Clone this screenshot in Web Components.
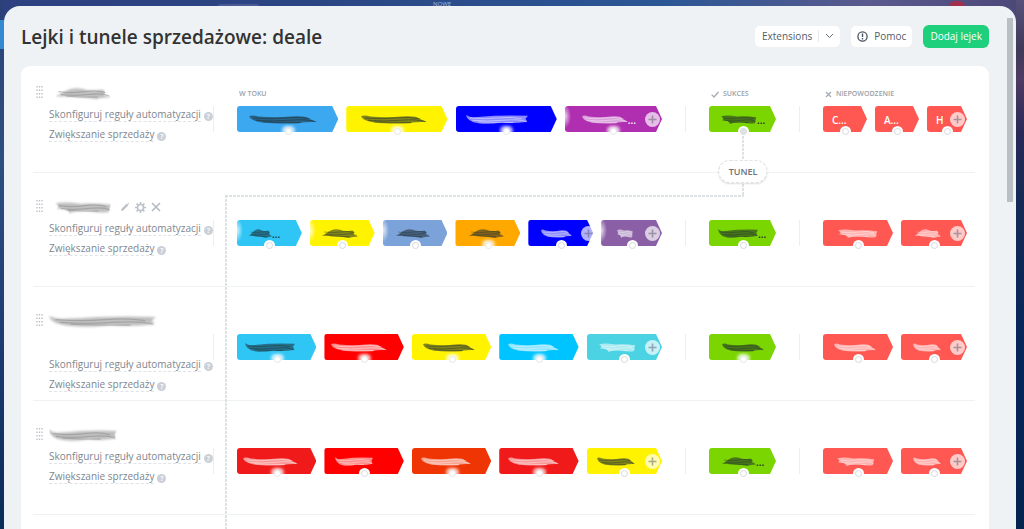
<!DOCTYPE html>
<html lang="pl">
<head>
<meta charset="utf-8">
<meta name="viewport" content="width=device-width, initial-scale=1">
<title>Lejki i tunele sprzedażowe</title>
<style>
  html, body { margin: 0; height: 100%; }
  body {
    overflow: hidden;
    font-family: "Open Sans", "Noto Sans", sans-serif;
    font-size: 10px;
    color: #525c69;
    --columns: 180px 472fr 114fr 176fr;
  }
</style>
</head>
<body>
<crm-backdrop>
  <side-panel>
    <panel-header slot="header" heading="Lejki i tunele sprzedażowe: deale"></panel-header>
    <funnel-board></funnel-board>
  </side-panel>
</crm-backdrop>

<script>
// creates the shadow root of an element from a markup string
function attach(el, html) {
  const template = document.createElement('template');
  template.innerHTML = html;
  const root = el.attachShadow({ mode: 'open' });
  root.appendChild(template.content.cloneNode(true));
  return root;
}

// dimmed page behind the panel
class CrmBackdrop extends HTMLElement {
  constructor() {
    super();
    attach(this, `
      <style>
        :host {
          display: flex;
          position: relative;
          box-sizing: border-box;
          height: 100vh;
          padding: 6px 8px 0 4px;
          overflow: hidden;
          background:
            linear-gradient(#3489d3, #3489d3) 0 20px / 4px 29px no-repeat,
            linear-gradient(#55517a, #403a58 50px, #4f3b62 80px, #2a2958 130px, #152a55 200px, #05265a 350px, #04234f) right / 8px 100% no-repeat,
            linear-gradient(#2b4178, #2f4f80 30%, #223f78 55%, #0b2b58) left / 4px 100% no-repeat,
            linear-gradient(90deg, #2e4080, #2b4583 30%, #2b5795 65%, #5b5a8e 85%, #4b4878);
        }
        .search { position: absolute; left: 217px; top: 4px; width: 43px; height: 8px; border-radius: 4px; background: #4a5b94; }
        .new { position: absolute; left: 433px; top: 0; font-size: 6px; line-height: 8px; color: #a9b8d8; }
        .badge { position: absolute; right: 59px; top: 1px; width: 16px; height: 12px; border-radius: 6px; background: #a2304c; }
        ::slotted(*) { flex: 1; min-width: 0; }
      </style>
      <span class="search"></span><span class="new">NOWE</span><span class="badge"></span>
      <slot></slot>
    `);
  }
}

class SidePanel extends HTMLElement {
  constructor() {
    super();
    attach(this, `
      <style>
        :host {
          display: block;
          position: relative;
          box-sizing: border-box;
          padding: 0 27px 0 17px;
          border-radius: 16px 16px 0 0;
          background: #eef2f4;
          overflow: hidden;
        }
        .thumb { position: absolute; right: 3px; top: 12px; width: 6px; height: 184px; background: #b9bfc3; }
      </style>
      <slot name="header"></slot>
      <slot></slot>
      <div class="thumb"></div>
    `);
  }
}

class PanelHeader extends HTMLElement {
  constructor() {
    super();
    const root = attach(this, `
      <style>
        :host { display: flex; align-items: center; height: 60px; gap: 11px; }
        h1 { flex: 1; margin: 0; padding-top: 2px; font-size: 19px; line-height: 24px; font-weight: 600; color: #333; white-space: nowrap; }
        button { font: inherit; color: inherit; border: 0; background: none; padding: 0; cursor: pointer; }
        .split, .help { display: flex; align-items: center; height: 21px; border-radius: 5px; background: #fff; }
        .split button:first-child { padding: 0 6px 0 7px; }
        .split button:last-child { display: flex; align-items: center; height: 12px; padding: 0 6px; border-left: 1px solid #e6e9ec; }
        .help { padding: 0 6px; gap: 6px; }
        .add { height: 23px; padding: 0 7px; border-radius: 6px; background: #1ecf7c; color: #fff; }
      </style>
      <h1></h1>
      <div class="split">
        <button type="button">Extensions</button>
        <button type="button" aria-label="Więcej">
          <svg width="9" height="6" viewBox="0 0 9 6"><path d="M1 1l3.500 3.500L8 1" fill="none" stroke="#6a737f"/></svg>
        </button>
      </div>
      <button type="button" class="help">
        <svg width="11" height="11" viewBox="0 0 11 11"><circle cx="5.500" cy="5.500" r="4.600" fill="none" stroke="#4a5361" stroke-width="1.300"/><path d="M5.500 2.500v3.500M5.500 7v1.400" stroke="#4a5361" stroke-width="1.400"/></svg>
        Pomoc
      </button>
      <button type="button" class="add">Dodaj lejek</button>
    `);
    this._title = root.querySelector('h1');
  }

  connectedCallback() {
    this._title.textContent = this.getAttribute('heading') || '';
  }
}

// hidden name: a wiped streak in place of the text
const STREAKS = {
  a: 'M0 0Q6 3 12 3Q30 2 46 1Q74 0 100 1L96 5L99 9Q76 12 58 10Q36 13 20 11Q2 9 0 0Z',
  b: 'M0 2Q4 -1 14 2Q40 4 62 2Q84 1 88 5L100 9Q80 9 74 11Q40 12 20 10Q4 8 0 2Z',
  c: 'M0 2Q14 -1 44 2Q70 1 98 3Q96 6 94 11Q80 12 62 10Q40 9 24 12Q28 8 2 7Q12 5 0 2Z',
  d: 'M0 9Q12 6 20 3Q34 -1 50 1Q62 4 84 2Q94 4 86 7L100 10Q84 10 74 12Q56 10 40 10Q20 9 0 9Z'
};

class WipedText extends HTMLElement {
  connectedCallback() {
    if (this.shadowRoot) return;
    attach(this, `
      <style>
        :host { display: block; }
        svg { display: block; width: 100%; height: 100%; overflow: visible; }
        .haze { filter: blur(1px); }
        .core { filter: blur(.6px); }
      </style>
      <svg viewBox="0 0 100 12" preserveAspectRatio="none" aria-hidden="true">
        <path class="haze" d="${STREAKS[this.getAttribute('shape')]}" fill="currentColor" opacity=".55"/>
        <path class="core" d="M6 4Q30 6 52 4T90 5M10 7Q34 9 60 7T97 9M20 9Q46 10 76 10" fill="none" stroke="currentColor" stroke-width="1.300" opacity=".5"/>
      </svg>
    `);
  }
}

class HelpHint extends HTMLElement {
  constructor() {
    super();
    attach(this, `
      <style>
        :host { display: inline-flex; }
        button {
          width: 9px; height: 9px; padding: 0; border: 0; border-radius: 50%;
          background: #cbd0d8; color: #fff; font: 600 7px/9px "Open Sans", sans-serif; cursor: pointer;
        }
      </style>
      <button type="button">?</button>
    `);
  }
}

class FunnelStage extends HTMLElement {
  connectedCallback() {
    if (this.shadowRoot) return;
    const a = (name) => this.getAttribute(name);
    const text = a('text');
    const label = text
      ? `<span class="text">${text}</span>`
      : `<wiped-text shape="${a('shape')}"></wiped-text>${this.hasAttribute('dots') ? '<span>...</span>' : ''}`;
    attach(this, `
      <style>
        :host { display: block; position: relative; flex: 1 1 4px; min-width: 0; height: 26px; }
        :host(:last-child) { flex-basis: 0; }
        .body {
          display: flex;
          align-items: center;
          box-sizing: border-box;
          height: 100%;
          padding: 1px 0 0 ${a('start')}px;
          border-radius: 3px 0 0 3px;
          overflow: hidden;
          background: ${this.hasAttribute('faded') ? 'radial-gradient(ellipse 6px 12px at 0 40%, #fffc, #fff0), ' : ''}${a('color')};
          color: ${a('ink') === 'dark' ? '#1d2a30' : '#fff'};
          clip-path: polygon(0 0, calc(100% - 6px) 0, 100% 50%, calc(100% - 6px) 100%, 0 100%);
          white-space: nowrap;
          font-weight: 600;
        }
        wiped-text { width: ${a('wide')}px; height: 9px; }
        .port {
          position: absolute; left: 50%; top: 100%; width: 7px; height: 7px; box-sizing: border-box;
          margin: -4px 0 0 -3px; border: 1px solid #d5dadd; border-radius: 50%; background: #fff;
          box-shadow: 0 0 0 2px #fff;
        }
        .soft { border-color: #e3e6e9; box-shadow: -2px -1px 3px 1px #fffb, 2px -1px 3px 1px #fffb; }
        .linked { background: #dfe3e7; }
        .add {
          position: absolute; right: ${a('plus') === 'edge' ? -3 : 2}px; top: 6px; width: 15px; height: 15px;
          padding: 0; border: 0; border-radius: 50%; background: #ffffffb0; cursor: pointer;
        }
        .add svg { display: block; }
      </style>
      <div class="body">${label}</div>
      <span class="port ${a('port') || ''}"></span>
      ${this.hasAttribute('plus') ? `
      <button type="button" class="add" aria-label="Dodaj">
        <svg width="15" height="15" viewBox="0 0 15 15"><path d="M7.500 3.500v8M3.500 7.500h8" stroke="#535c69" stroke-opacity=".5" stroke-width="1.600"/></svg>
      </button>` : ''}
    `);
  }
}

// one band of stages, with an optional caption above
class StageGroup extends HTMLElement {
  constructor() {
    super();
    attach(this, `
      <style>
        :host { display: block; min-width: 0; }
        ::slotted([slot=caption]) {
          display: flex; align-items: center; gap: 4px; height: 10px; margin: -17px 0 7px;
          padding-left: 26px; font-size: 7px; line-height: 10px; font-weight: 600; color: #9aa1a9;
        }
        .band { display: flex; gap: 8px; padding: 0 23px; border-left: 1px solid #eceff1; }
        :host([kind=fail]) .band { padding-right: 8px; }
      </style>
      <slot name="caption"></slot>
      <div class="band"><slot></slot></div>
    `);
  }
}

class FunnelRow extends HTMLElement {
  connectedCallback() {
    if (this.shadowRoot) return;
    const f = this.funnel;
    const tools = `
      <span class="tools">
        <button type="button" aria-label="Edytuj"><svg width="10" height="10" viewBox="0 0 10 10"><path d="M1 9l.6-2.200L6.800 1.600l1.600 1.600L3.200 8.400zM7.400 1l.6-.5 1.500 1.500-.5.6z" fill="#bcc2c9"/></svg></button>
        <button type="button" aria-label="Ustawienia"><svg width="11" height="11" viewBox="0 0 11 11"><circle cx="5.500" cy="5.500" r="3" fill="none" stroke="#bcc2c9" stroke-width="1.600"/><path d="M5.500 0v2M5.500 9v2M0 5.500h2M9 5.500h2M1.600 1.600l1.500 1.500M7.900 7.900l1.500 1.500M9.400 1.600L7.900 3.100M3.100 7.900L1.600 9.400" stroke="#bcc2c9" stroke-width="1.700"/></svg></button>
        <button type="button" aria-label="Usuń"><svg width="10" height="10" viewBox="0 0 10 10"><path d="M1 1l8 8M9 1L1 9" stroke="#b4bac1" stroke-width="1.600"/></svg></button>
      </span>`;
    attach(this, `
      <style>
        :host {
          display: grid;
          grid-template-columns: var(--columns);
          box-sizing: border-box;
          min-height: 114px;
          margin: 0 14px 0 12px;
          border-bottom: 1px solid #eff1f3;
        }
        :host(:first-of-type) { min-height: 107px; }
        .info { display: grid; grid-template-columns: 7px 1fr; column-gap: 6px; align-content: start; padding: 22px 0 0 3px; white-space: nowrap; }
        :host(:first-of-type) .info { padding-top: 15px; }
        .name { display: flex; align-items: center; height: 24px; gap: 8px; color: #8b8b8b; }
        .tall { padding-bottom: 22px; }
        .name wiped-text { height: 11px; }
        .handle { margin-top: 5px; }
        .tools { display: flex; gap: 5px; }
        .tools button { display: flex; padding: 0; border: 0; background: none; cursor: pointer; }
        .link { grid-column: 2; display: flex; align-items: center; height: 20px; gap: 3px; }
        a { color: #80868e; text-decoration: none; line-height: 13px; border-bottom: 1px dashed #dfe3e7; }
        help-hint { margin-top: 2px; }
        stage-group { padding-top: 47px; }
        :host(:first-of-type) stage-group { padding-top: 40px; }
      </style>
      <div class="info">
        <svg class="handle" width="7" height="12" viewBox="0 0 7 12"><path d="M1 0v12M3.500 0v12M6 0v12" stroke="#b9bfc6" stroke-width="1.300" stroke-dasharray="1.500 2"/></svg>
        <div class="name ${f.tall ? 'tall' : ''}">
          <wiped-text shape="${f.shape}" style="width:${f.width}px; margin-left:${f.start}px"></wiped-text>${f.tools ? tools : ''}
        </div>
        <div class="link"><a href="#automation">Skonfiguruj reguły automatyzacji</a><help-hint></help-hint></div>
        <div class="link"><a href="#sales">Zwiększanie sprzedaży</a><help-hint></help-hint></div>
      </div>
      ${['progress', 'success', 'fail'].map((kind) => `
        <stage-group kind="${kind}">
          ${f.captions ? CAPTIONS[kind] : ''}
          ${f[kind].map((s) => `<funnel-stage ${s}></funnel-stage>`).join('')}
        </stage-group>`).join('')}
    `);
  }
}

const CAPTIONS = {
  progress: '<span slot="caption">W TOKU</span>',
  success: '<span slot="caption"><svg width="8" height="7" viewBox="0 0 8 7"><path d="M.6 3.600L3 6l4.500-5" fill="none" stroke="#a4abb3" stroke-width="1.300"/></svg>SUKCES</span>',
  fail: '<span slot="caption"><svg width="7" height="7" viewBox="0 0 7 7"><path d="M1 1l5 5M6 1L1 6" stroke="#a4abb3" stroke-width="1.300"/></svg>NIEPOWODZENIE</span>'
};

// attributes of one stage
function stage(color, ink, start, wide, shape, more = '') {
  return `color="${color}" ink="${ink}" start="${start}" wide="${wide}" shape="${shape}" ${more}`;
}

const RED = '#ff5752';
const GREEN = '#7bd500';
const YELLOW = '#fff300';

const FUNNELS = [
  {
    shape: 'd', width: 56, start: 6, captions: true,
    progress: [
      stage('#3ba8f0', 'dark', 12, 68, 'b', 'port="soft"'),
      stage(YELLOW, 'dark', 15, 66, 'b', 'port="soft"'),
      stage('#0000ff', 'light', 10, 62, 'a', 'port="soft"'),
      stage('#b02eb0', 'light', 17, 46, 'b', 'port="soft" plus dots faded')
    ],
    success: [stage(GREEN, 'dark', 12, 36, 'c', 'port="linked" dots')],
    fail: [
      `color="${RED}" start="9" text="C..."`,
      `color="${RED}" start="9" text="A..."`,
      `color="${RED}" start="9" text="H" plus`
    ]
  },
  {
    shape: 'c', width: 57, start: 6, tools: true,
    progress: [
      stage('#2fc6f6', 'dark', 12, 23, 'd', 'dots faded'),
      stage(YELLOW, 'dark', 12, 36, 'd', 'faded'),
      stage('#7ba3da', 'dark', 13, 34, 'd', 'faded'),
      stage('#ffa900', 'dark', 14, 35, 'd', 'port="soft"'),
      stage('#0000ff', 'light', 13, 31, 'b', 'plus="edge"'),
      stage('#8a5fa6', 'light', 16, 16, 'c', 'plus faded')
    ],
    success: [stage(GREEN, 'dark', 9, 40, 'a', 'dots')],
    fail: [
      stage(RED, 'light', 15, 40, 'c'),
      stage(RED, 'light', 14, 26, 'd', 'plus')
    ]
  },
  {
    shape: 'a', width: 107, start: 0, tall: true,
    progress: [
      stage('#2fc6f6', 'dark', 8, 50, 'a', 'port="soft"'),
      stage('#ff0000', 'light', 7, 56, 'b', 'port="soft"'),
      stage(YELLOW, 'dark', 11, 52, 'b', 'port="soft"'),
      stage('#00c4ff', 'light', 9, 51, 'b', 'port="soft"'),
      stage('#4bd3e4', 'light', 12, 37, 'c', 'plus')
    ],
    success: [stage(GREEN, 'dark', 13, 42, 'b', 'port="soft"')],
    fail: [
      stage(RED, 'light', 11, 42, 'b'),
      stage(RED, 'light', 12, 28, 'b', 'plus')
    ]
  },
  {
    shape: 'a', width: 68, start: 0,
    progress: [
      stage('#f11a1a', 'light', 6, 55, 'b', 'port="soft"'),
      stage('#ff0000', 'light', 11, 38, 'a'),
      stage('#f03505', 'light', 9, 50, 'b', 'port="soft"'),
      stage('#f11a1a', 'light', 9, 51, 'b', 'port="soft"'),
      stage(YELLOW, 'dark', 10, 38, 'b', 'plus')
    ],
    success: [stage(GREEN, 'dark', 13, 34, 'd', 'dots')],
    fail: [
      stage(RED, 'light', 14, 38, 'c'),
      stage(RED, 'light', 12, 28, 'b', 'plus')
    ]
  }
];

// connector from the success stage of the first funnel to the funnel below
class TunnelLink extends HTMLElement {
  constructor() {
    super();
    attach(this, `
      <style>
        :host {
          display: grid;
          grid-template-columns: var(--columns);
          position: absolute;
          inset: 70px 13px 0 13px;
          pointer-events: none;
          --across: repeating-linear-gradient(90deg, #dde2e5 0 3px, #fff 3px 4px);
          --down: repeating-linear-gradient(#dde2e5 0 3px, #fff 3px 4px);
        }
        .target {
          grid-column: 2; margin: 59px 0 0 11px;
          background: var(--across) top / 100% 2px no-repeat, var(--down) left / 2px 100% no-repeat;
        }
        .source {
          grid-column: 3; display: flex; justify-content: flex-end; align-items: center;
          width: 50%; height: 61px; padding-right: 1px;
          background: var(--across) bottom / 100% 2px no-repeat, var(--down) right / 2px 100% no-repeat;
        }
        button {
          flex: none; height: 23px; padding: 0 9px; margin: 9px 0 0; transform: translateX(50%);
          border: 1px dashed #dfe3e7; border-radius: 12px; background: #fff; box-shadow: 0 1px 2px #0002;
          font: 600 9px "Open Sans", sans-serif; color: #6c7278; pointer-events: auto; cursor: pointer;
        }
      </style>
      <div class="target"></div>
      <div class="source"><button type="button">TUNEL</button></div>
    `);
  }
}

class FunnelBoard extends HTMLElement {
  constructor() {
    super();
    const root = attach(this, `
      <style>
        :host { display: block; position: relative; min-height: 470px; border-radius: 9px 9px 0 0; background: #fff; }
      </style>
    `);
    FUNNELS.forEach((funnel) => {
      const row = document.createElement('funnel-row');
      row.funnel = funnel;
      root.appendChild(row);
    });
    root.appendChild(document.createElement('tunnel-link'));
  }
}

customElements.define('wiped-text', WipedText);
customElements.define('help-hint', HelpHint);
customElements.define('funnel-stage', FunnelStage);
customElements.define('stage-group', StageGroup);
customElements.define('funnel-row', FunnelRow);
customElements.define('tunnel-link', TunnelLink);
customElements.define('funnel-board', FunnelBoard);
customElements.define('panel-header', PanelHeader);
customElements.define('side-panel', SidePanel);
customElements.define('crm-backdrop', CrmBackdrop);
</script>
</body>
</html>
